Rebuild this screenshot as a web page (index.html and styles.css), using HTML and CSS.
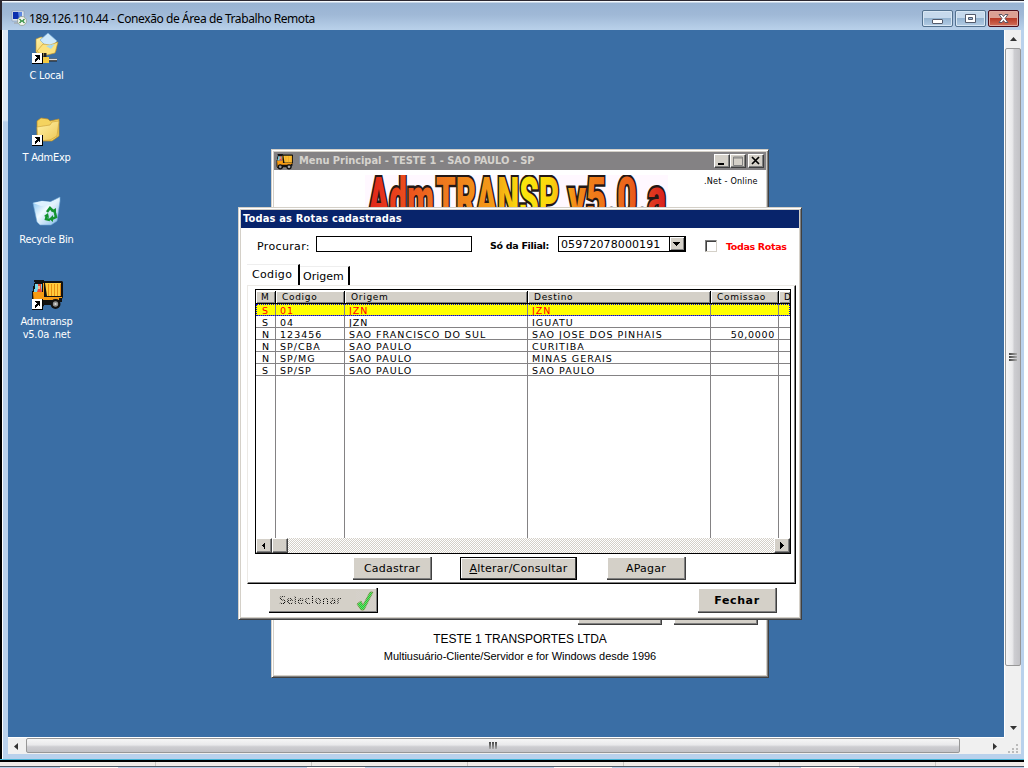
FILE: index.html
```html
<!DOCTYPE html>
<html lang="pt-BR">
<head>
<meta charset="utf-8">
<title>Conexão de Área de Trabalho Remota</title>
<link rel="stylesheet" href="styles.css">
</head>
<body>
<svg class="defs" width="0" height="0">
  <defs>
    <linearGradient id="folder" x1="0" y1="0" x2="1" y2="1"><stop offset="0" stop-color="#fff3a8"/><stop offset="1" stop-color="#edc655"/></linearGradient>
    <linearGradient id="glass" x1="0" y1="0" x2="1" y2="1"><stop offset="0" stop-color="#6fb8f0"/><stop offset=".45" stop-color="#f0faff"/><stop offset="1" stop-color="#7fb6e6"/></linearGradient>
    <linearGradient id="fire" gradientUnits="userSpaceOnUse" x1="0" y1="0" x2="303" y2="0"><stop offset="0" stop-color="#dc2318"/><stop offset=".08" stop-color="#e93a1c"/><stop offset=".24" stop-color="#ee741f"/><stop offset=".42" stop-color="#f39a17"/><stop offset=".52" stop-color="#fae50c"/><stop offset=".61" stop-color="#fbd70d"/><stop offset=".7" stop-color="#f28718"/><stop offset=".87" stop-color="#eb641c"/><stop offset="1" stop-color="#d81b20"/></linearGradient>
    <pattern id="dither" width="2" height="2" patternUnits="userSpaceOnUse"><rect width="1" height="1" fill="#d6d3ce"/><rect x="1" y="1" width="1" height="1" fill="#d6d3ce"/></pattern>
    <symbol id="shortcut" viewBox="0 0 11 11"><path fill="#000" d="M0 0h11v11H0z"/><path fill="#fff" d="M0 0h10v10H0z"/><path fill="#000" d="M3 2h5v5H7V6H6v1H5v1H4v1H3V6h1V5h1V4H4V3H3z"/></symbol>
    <symbol id="truck" viewBox="0 0 32 32">
      <path fill="#111" d="M3 2h10v1h18l1 1v15l-1 2v3h-2v3H13v1H2v-2H1V13h1V8h1V5h1V4H3z"/>
      <path fill="#f79b13" d="M2 14h10V5h1v14h18v1h-3v2H11v5H3z"/>
      <path fill="#ffcb3d" d="M14 5h16v13H16z"/>
      <path stroke="#e78d12" stroke-width="1" d="M17.500 6v12M20.500 6v12M23.500 6v12M26.500 6v12M29.500 6v12"/>
      <path fill="#79d7ea" d="M4 6h7v8H3v-3h1z"/><path fill="#ed4938" d="M7 6h3v3l1 5H6l1-3z"/><path fill="#f9bb83" d="M7 8h2v3H7z"/>
      <circle cx="24.500" cy="26" r="5" fill="#111"/><circle cx="24.500" cy="26" r="2.700" fill="#929292"/><circle cx="24.500" cy="26" r="1.100" fill="#ddd"/>
      <circle cx="8" cy="26" r="5" fill="#111"/><circle cx="8" cy="26" r="2.500" fill="#929292"/>
    </symbol>
  </defs>
</svg>
<div class="remote">
  <header class="aero-title">
    <svg class="rdp" width="16" height="16" viewBox="0 0 16 16"><path fill="#dce6ef" stroke="#8899ae" stroke-width=".6" d="M1 1h12v10H1z"/><path fill="#0b2fae" d="M2 2h7v7H2z"/><path fill="#5d87e0" d="M7 2h4v7H8z"/><path fill="#a8b4c0" d="M3 12h6v2H3z"/><circle cx="11" cy="11" r="4.500" fill="#f2f5ee" stroke="#8b9586" stroke-width=".7"/><path d="M8.500 9l2 2-2 2M13.500 9l-2 2 2 2" fill="none" stroke="#258836" stroke-width="1.100"/></svg>
    <span class="aero-text">189.126.110.44 - Conexão de Área de Trabalho Remota</span>
    <div class="aero-btns">
      <i class="ab"><svg width="29" height="15"><rect x="9.500" y="8.500" width="10" height="4" rx=".5" fill="#fff" stroke="#535a6b"/></svg></i>
      <i class="ab"><svg width="29" height="15"><path d="M9.500 3.500h10v8h-10z" fill="#fff" stroke="#535a6b"/><path d="M12.500 6.500h4v2h-4z" fill="#9db9da" stroke="#535a6b"/></svg></i>
      <i class="ab ab-close"><svg width="29" height="15"><path d="M10 3.500h3l1.500 2 1.500-2h3l-3 4 3 4h-3l-1.500-2-1.500 2h-3l3-4z" fill="#fff" stroke="#5b5664"/></svg></i>
    </div>
  </header>
  <div class="aero-body">
    <main class="desktop">
      <nav class="icons">
        <div class="icon"><svg width="32" height="32" viewBox="0 0 32 32"><path fill="url(#folder)" stroke="#b98a25" stroke-width=".6" d="M5 7l5-2 15 4v10l-15 5-5-4z"/><path fill="#cde9fb" stroke="#72a9d8" stroke-width=".6" d="M9 8l8-7 9 8-8 8z"/><path fill="#fbe27e" stroke="#c59529" stroke-width=".6" d="M6 19l6-7 7 1 8-3-3 11-12 3z"/><path fill="#a5d8f2" d="M15 14l9-2-4 5z"/><path d="M14 21v4M14 28h12" stroke="#222" stroke-width="3"/><path d="M14 27.500h12" stroke="#ddd" stroke-width="1.500"/><path fill="#f4cb42" d="M12 25h6v6h-6z"/><use href="#shortcut" x="1" y="21" width="11" height="11"/></svg><span class="il">C Local</span></div>
        <div class="icon"><svg width="32" height="32" viewBox="0 0 32 32"><path fill="#f4d35f" stroke="#b98a25" stroke-width=".7" d="M6 7l4-3 7 1 2 2 9-2v17l-7 5H8l-2-2z"/><path fill="url(#folder)" stroke="#c79c35" stroke-width=".6" d="M6 13l13-2 2-3 7-1-2 15-7 4-12 1z"/><use href="#shortcut" x="1" y="21" width="11" height="11"/></svg><span class="il">T AdmExp</span></div>
        <div class="icon"><svg width="32" height="32" viewBox="0 0 32 32"><path fill="url(#glass)" stroke="#70a9d6" stroke-width=".6" d="M2 7l9-2 8 1 10-5v4l-3 20-6 4H9l-3-3z"/><path fill="#def2ff" d="M2 7l8 3 10-1 9-6-9 3-9-1z"/><g fill="none" stroke="#13932f" stroke-width="2.500"><path d="M16 16l3-4 3 3M24 17l1 4-4 2M19 24l-4-1 1-4"/></g><path fill="#13932f" d="M20 15l5-3v6zM22 19v7l-4-3zM13 20l4-3 1 5z"/></svg><span class="il">Recycle Bin</span></div>
        <div class="icon"><svg width="32" height="32"><use href="#truck" width="32" height="32"/><use href="#shortcut" x="1" y="21" width="11" height="11"/></svg><span class="il">Admtransp<br>v5.0a .net</span></div>
      </nav>

      <section class="win menu">
        <div class="menu-title"><svg width="17" height="17"><use href="#truck" width="17" height="17"/></svg><span class="menu-text">Menu Principal - TESTE 1 - SAO PAULO - SP</span>
          <i class="wb"><svg width="12" height="10"><path d="M2 7h6v2H2z"/></svg></i><i class="wb"><svg width="12" height="10"><path d="M1.500 1h9v8.500h-9zM1 2h10" fill="none" stroke="#808080"/></svg></i><i class="wb gap"><svg width="12" height="10"><path d="M2 1l7 7M9 1L2 8" stroke="#000" stroke-width="1.700"/></svg></i>
        </div>
        <div class="menu-head">
          <svg class="logo" width="303" height="34"><g class="logo-text"><text x="3" y="43" textLength="66" lengthAdjust="spacingAndGlyphs">Adm</text><text x="71" y="43" textLength="123" lengthAdjust="spacingAndGlyphs">TRANSP</text><text x="203" y="43" textLength="98" lengthAdjust="spacingAndGlyphs">v5.0.a</text></g></svg>
          <span class="online">.Net - Online</span>
        </div>
        <div class="menu-foot">
          <div class="hidden-btns"><i class="btn"></i><i class="btn"></i></div>
          <p class="company">TESTE 1 TRANSPORTES LTDA</p>
          <p class="slogan">Multiusuário-Cliente/Servidor e for Windows desde 1996</p>
        </div>
      </section>

      <section class="win dialog">
        <div class="dlg-title">Todas as Rotas cadastradas</div>
        <div class="filters">
          <label class="lb-proc">Procurar:</label><span class="search"></span>
          <label class="lb-fil">Só da Filial:</label>
          <span class="combo"><span class="combo-v">05972078000191</span><i class="drop"><svg width="9" height="5"><path d="M1 0h7v1H7v1H6v1H5v1H4V3H3V2H2V1H1z"/></svg></i></span>
          <i class="check"></i><label class="lb-todas">Todas Rotas</label>
        </div>
        <div class="tabs"><span class="tab on">Codigo</span><span class="tab">Origem</span></div>
        <div class="page">
          <div class="grid">
            <div class="row head"><b>M</b><b>Codigo</b><b>Origem</b><b>Destino</b><b>Comissao</b><b>D</b></div>
            <div class="row sel"><span>S</span><span>01</span><span>JZN</span><span>JZN</span><span></span><span></span></div>
            <div class="row"><span>S</span><span>04</span><span>JZN</span><span>IGUATU</span><span></span><span></span></div>
            <div class="row"><span>N</span><span>123456</span><span>SAO FRANCISCO DO SUL</span><span>SAO JOSE DOS PINHAIS</span><span>50,0000</span><span></span></div>
            <div class="row"><span>N</span><span>SP/CBA</span><span>SAO PAULO</span><span>CURITIBA</span><span></span><span></span></div>
            <div class="row"><span>N</span><span>SP/MG</span><span>SAO PAULO</span><span>MINAS GERAIS</span><span></span><span></span></div>
            <div class="row"><span>S</span><span>SP/SP</span><span>SAO PAULO</span><span>SAO PAULO</span><span></span><span></span></div>
            <div class="row rest"><span></span><span></span><span></span><span></span><span></span><span></span></div>
            <div class="hs"><i class="sb"><svg width="4" height="7"><path d="M3 0v7H2V5H1V4H0V3h1V2h1V1h1z"/></svg></i><i class="sb"></i><i class="sb end"><svg width="4" height="7"><path d="M0 0h1v1h1v1h1v1h1v1H3v1H2v1H1v1H0z"/></svg></i></div>
          </div>
          <div class="actions"><button class="btn cad">Cadastrar</button><button class="btn alt"><span><u>A</u>lterar/Consultar</span></button><button class="btn apa">APagar</button></div>
        </div>
        <div class="bottom">
          <button class="btn seleciona"><span class="dis">Selecionar</span><svg width="18" height="20"><path d="M1 13l4-3 2 4 7-13h3L8 19H5z" fill="#1ad52c" stroke="#6d8a35" stroke-width=".8"/><path d="M0 0h18v20H0z" fill="url(#dither)" opacity=".45"/></svg></button>
          <button class="btn fechar">Fechar</button>
        </div>
      </section>
    </main>
    <div class="vbar"><svg width="17" height="17"><path d="M5 11h7L8.500 7z" fill="#333"/></svg><div class="vthumb"><i></i><i></i><i></i></div><svg width="17" height="17"><path d="M5 6h7L8.500 10z" fill="#333"/></svg></div>
    <div class="hbar"><svg width="18" height="17"><path d="M10 5v7L6 8.500z" fill="#333"/></svg><div class="hthumb"><i></i><i></i><i></i></div><svg class="harrow" width="17" height="17"><path d="M6 5v7l4-3.500z" fill="#333"/></svg></div>
    <div class="grip"><svg width="17" height="17"><path d="M12 7h2v2h-2zM8 11h2v2H8zM12 11h2v2h-2zM4 14h2v2H4zM8 14h2v2H8zM12 14h2v2h-2z" fill="#bbb"/></svg></div>
  </div>
  <footer class="behind"><div class="sheet"></div><div class="strip"><i></i><i></i><i></i><i></i></div></footer>
</div>
</body>
</html>
```
FILE: styles.css
```css
* { box-sizing: border-box; }
html, body { margin: 0; background: #fff; width: 1028px; height: 768px; overflow: hidden; }
body { font: 11px/13px "DejaVu Sans", sans-serif; color: #000; }
i { font-style: normal; display: block; }
p { margin: 0; }
svg { display: block; flex: none; }
.defs { position: absolute; }
.remote { width: 1024px; height: 768px; display: flex; flex-direction: column; overflow: hidden; }

/* outer window */
.aero-title { height: 30px; flex: none; display: flex; align-items: flex-start; padding: 10px 5px 0 9px; border-top: 1px solid #2b2730; border-left: 2px solid #2b2730; background: linear-gradient(#f4f8fc 0, #f4f8fc 1px, #98b3d2 2px, #a0b9d7 14px, #b9d1ea 29px); }
.rdp { margin-top: -1px; }
.aero-text { font: 12px/15px "Noto Sans", sans-serif; margin: 0 0 0 2px; white-space: nowrap; width: 300px; letter-spacing: -.42px; }
.aero-btns { display: flex; gap: 2px; margin: -1px 0 0 auto; }
.ab { width: 31px; height: 17px; border: 1px solid #53718f; border-radius: 2px; background: linear-gradient(#c6d9ec 0 48%, #95b4d1 50%, #b3cce4); box-shadow: inset 0 0 0 1px #d8e7f4; }
.ab-close { border-color: #4b0d1b; background: linear-gradient(#dca093 0 48%, #b83a26 50%, #d2705a); box-shadow: inset 0 0 0 1px #dfaaa0; }
.aero-body { height: 730px; flex: none; display: grid; grid-template: 707px 17px / 996px 17px; padding-left: 6px; border-left: 2px solid #000; border-right: 3px solid #b9d1ec; background: linear-gradient(#dce8f5 0 90px, #b9d1ec 92px); box-shadow: inset 1px 0 #fff; }
.vbar { background: #f0f0f0; display: flex; flex-direction: column; border-left: 1px solid #fff; }
.vbar > svg { width: 16px; }
.vthumb { height: 619px; margin-top: 1px; border: 1px solid #979797; border-radius: 2px; background: linear-gradient(90deg, #f6f6f6 0, #e9e9eb 45%, #cdcdd1 60%, #c2c2c6); display: flex; flex-direction: column; align-items: center; justify-content: center; gap: 1px; }
.vthumb i { width: 8px; height: 2px; background: linear-gradient(90deg, #444, #aaa); }
.vbar svg:last-child { margin-top: 54px; }
.hbar { background: #f0f0f0; display: flex; border-top: 1px solid #fff; }
.hthumb { width: 934px; height: 15px; border: 1px solid #979797; border-radius: 2px; background: linear-gradient(#f6f6f6 0, #e9e9eb 45%, #cdcdd1 60%, #c2c2c6); display: flex; align-items: center; justify-content: center; gap: 1px; }
.hthumb i { width: 2px; height: 7px; background: linear-gradient(#444, #aaa); }
.harrow { margin-left: auto; }
.grip { background: #f0f0f0; }
.behind { height: 8px; flex: none; border-top: 2px solid #000; position: relative; box-shadow: 0 -1px #45b4d6; }
.sheet { height: 4px; background: repeating-linear-gradient(90deg, #f0ece8 0 155px, #ccc8c4 155px 156px); }
.strip { height: 2px; border-top: 1px solid #4d5966; background: #b9d1ec; display: flex; gap: 189px; padding-left: 60px; }
.strip i { width: 58px; height: 1px; background: #fff; flex: none; }

/* desktop */
.desktop { position: relative; background: #3a6ea5; overflow: hidden; }
.icons { width: 77px; padding-top: 2px; display: flex; flex-direction: column; }
.icon { height: 82px; display: flex; flex-direction: column; align-items: center; color: #fff; font: 11px/13px "DejaVu Sans Condensed", "DejaVu Sans", sans-serif; text-align: center; }
.il { margin-top: 5px; letter-spacing: -.25px; white-space: nowrap; }
.win { position: absolute; background: #fff; border: 1px solid; border-color: #d4d0c8 #404040 #404040 #d4d0c8; box-shadow: inset 1px 1px #fff, inset -1px -1px #808080, inset 2px 2px #d4d0c8, inset -2px -2px #d4d0c8; padding: 2px; }

/* main menu window */
.menu { left: 263px; top: 119px; width: 498px; height: 529px; display: flex; flex-direction: column; }
.menu-title { height: 18px; background: #848284; display: flex; align-items: center; padding: 0 2px; color: #d6d3ce; font: bold 11px/18px "DejaVu Sans Condensed", "DejaVu Sans", sans-serif; flex: none; }
.menu-text { margin-left: 6px; margin-right: auto; white-space: nowrap; letter-spacing: -.05px; }
.wb { width: 16px; height: 14px; background: #d4d0c8; border: 1px solid; border-color: #fff #404040 #404040 #fff; box-shadow: inset -1px -1px #808080; padding: 1px; }
.gap { margin-left: 2px; }
.menu-head { display: flex; padding: 5px 0 0 91px; height: 40px; flex: none; }
.logo { background: #fff8ff; }
.logo-text { font: 900 57px Roboto, sans-serif; fill: url(#fire); stroke: #231816; stroke-width: 5px; paint-order: stroke; }
.online { margin-left: 36px; font: 9px/13px "DejaVu Sans Condensed", sans-serif; letter-spacing: .22px; white-space: nowrap; }
.menu-foot { margin-top: auto; height: 73px; text-align: center; font-family: "Liberation Sans", sans-serif; }
.hidden-btns { display: flex; gap: 12px; padding-left: 304px; }
.hidden-btns .btn { width: 84px; height: 23px; }
.company { font-size: 12px; line-height: 14px; margin-top: 7px; letter-spacing: -.05px; }
.slogan { font-size: 11px; line-height: 13px; margin-top: 4px; letter-spacing: -.04px; }

/* routes dialog */
.dialog { left: 230px; top: 177px; width: 564px; height: 413px; display: flex; flex-direction: column; }
.dlg-title { height: 18px; flex: none; background: #08246b; color: #fff; font: bold 11px/18px "DejaVu Sans Condensed", sans-serif; padding-left: 2px; letter-spacing: .17px; }
.filters { height: 32px; flex: none; margin-top: 4px; padding: 4px 0 0 16px; display: flex; }
.lb-proc { width: 59px; padding-top: 4px; letter-spacing: .35px; font-size: 11px; }
.search { width: 156px; height: 16px; border: 1px solid #000; margin-right: 18px; }
.lb-fil { width: 68px; padding-top: 3px; font-weight: bold; font-size: 9.500px; letter-spacing: -.3px; white-space: nowrap; }
.combo { width: 128px; height: 16px; border: 1px solid #000; display: flex; justify-content: space-between; }
.combo-v { padding-left: 2px; line-height: 15px; letter-spacing: .1px; }
.drop { width: 16px; background: #d4d0c8; border: 1px solid #000; border-width: 0 1px 1px 1px; box-shadow: inset 1px 1px #fff, inset -1px -1px #808080; padding: 5px 2px; }
.check { width: 12px; height: 12px; margin: 4px 9px 0 19px; border: 1px solid; border-color: #808080 #d4d0c8 #d4d0c8 #808080; box-shadow: inset 1px 1px #404040; }
.lb-todas { color: #f00; font-weight: bold; font-size: 9.500px; padding-top: 4px; letter-spacing: -.35px; white-space: nowrap; }
.tabs { display: flex; height: 21px; flex: none; padding-left: 6px; }
.tab { height: 19px; margin-top: 2px; width: 50px; border-right: 2px solid #000; padding: 3px 0 0 3px; border-top: 1px solid #eee; }
.tab.on { height: 21px; margin-top: 0; width: 53px; padding: 3px 0 0 5px; letter-spacing: .35px; }
.page { width: 549px; height: 299px; flex: none; margin-left: 6px; border: 1px solid; border-color: #eceae6 #000 #000 #eceae6; box-shadow: inset -1px -1px #808080; padding: 3px 0 0 7px; }
.grid { width: 536px; height: 265px; border: 1px solid #000; overflow: hidden; display: flex; flex-direction: column; font-size: 9px; line-height: 11px; letter-spacing: .7px; }
.row { display: grid; grid-template-columns: 20px 69px 183px 183px 68px 11px; height: 12px; flex: none; white-space: nowrap; }
.row span { border-right: 1px solid #848284; border-bottom: 1px solid #848284; padding-left: 4px; overflow: hidden; font-size: 9.500px; line-height: 13px; letter-spacing: 1.020px; }
.row span:first-child { padding-left: 6px; }
.row span:nth-child(5) { text-align: right; padding-right: 3px; letter-spacing: .7px; }
.row span:last-child { border-right: 0; }
.row b { font-weight: normal; background: #d4d0c8; border-right: 1px solid #000; border-left: 1px solid #fff; box-shadow: inset 0 1px #fff, inset -1px -1px #808080; padding-left: 5px; line-height: 12px; overflow: hidden; }
.row b:first-child { padding-left: 4px; }
.row b:last-child { border-right: 0; padding-left: 4px; }
.head { height: 14px; padding-top: 1px; border-bottom: 1px solid #000; }
.sel { background: #ff0; color: #f00; outline: 1px dotted #00d; outline-offset: -1px; }
.rest { height: auto; flex: 1; }
.rest span { border-bottom: 0; }
.hs { height: 15px; flex: none; display: flex; background: conic-gradient(#d4d0c8 25%, #fff 0 50%, #d4d0c8 0 75%, #fff 0) 0 0 / 2px 2px; }
.sb { width: 16px; height: 15px; background: #d4d0c8; border: 1px solid; border-color: #fff #404040 #404040 #fff; box-shadow: inset -1px -1px #808080; padding: 3px 5px; }
.end { margin-left: auto; }
.btn { height: 23px; border: 0; border-right: 1px solid #404040; border-bottom: 1px solid #404040; background: #d4d0c8; box-shadow: inset -1px -1px #808080, inset 1px 1px #fff; font: 11px/13px "DejaVu Sans", sans-serif; letter-spacing: .25px; padding: 0; color: #000; display: flex; align-items: center; justify-content: center; }
.actions { display: flex; margin: 3px 0 0 98px; }
.cad { width: 79px; }
.alt { width: 117px; border: 1px solid #000; box-shadow: inset -1px -1px #404040, inset 1px 1px #fff; margin: 0 30px 0 28px; }
.apa { width: 79px; }
.bottom { display: flex; justify-content: space-between; padding: 4px 22px 0 28px; }
.bottom .btn { height: 25px; }
.seleciona { width: 109px; border-color: #000; justify-content: flex-start; padding-left: 10px; }
.seleciona svg { margin-left: auto; margin-right: 3px; margin-top: 2px; }
.dis { width: 66px; text-align: left; letter-spacing: .5px; color: transparent; background: conic-gradient(#000 25%, #c4c0b8 0 50%, #000 0 75%, #c4c0b8 0) 0 0 / 2px 2px; -webkit-background-clip: text; background-clip: text; }
.bottom .fechar { width: 79px; font-weight: bold; letter-spacing: .6px; }
```
